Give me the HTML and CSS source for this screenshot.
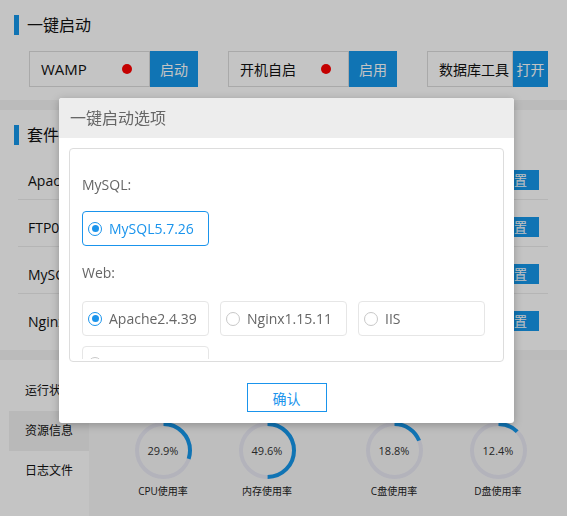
FILE: index.html
```html
<!DOCTYPE html>
<html lang="zh-CN">
<head>
<meta charset="utf-8">
<title>一键启动选项</title>
<link rel="stylesheet" href="styles.css">
</head>
<body>
<div class="page">
  <section class="sec sec-start">
    <h2 class="sec-title">一键启动</h2>
    <div class="cards">
      <div class="card">
        <div class="card-box box-wide"><span class="latin">WAMP</span><i class="dot"></i></div>
        <button class="btn btn-wide">启动</button>
      </div>
      <div class="card">
        <div class="card-box box-wide"><span>开机自启</span><i class="dot"></i></div>
        <button class="btn btn-wide">启用</button>
      </div>
      <div class="card">
        <div class="card-box box-narrow"><span>数据库工具</span></div>
        <button class="btn btn-narrow">打开</button>
      </div>
    </div>
  </section>
  <div class="band"></div>
  <section class="sec sec-suite">
    <h2 class="sec-title">套件</h2>
    <ul class="rows">
      <li class="row"><span>Apache2.4.39</span><button class="btn-sm">设置</button></li>
      <li class="row"><span>FTP0.9.60</span><button class="btn-sm">设置</button></li>
      <li class="row"><span>MySQL5.7.26</span><button class="btn-sm">设置</button></li>
      <li class="row"><span>Nginx1.15.11</span><button class="btn-sm">设置</button></li>
    </ul>
  </section>
  <div class="band"></div>
  <section class="sec-bottom">
    <nav class="nav">
      <div class="nav-item">运行状态</div>
      <div class="nav-item active">资源信息</div>
      <div class="nav-item">日志文件</div>
    </nav>
    <div class="main">
      <div class="gauge-group">
        <div class="gauge">
          <div class="ring">
            <svg viewBox="0 0 57 57" width="57" height="57"><circle class="track" cx="28.5" cy="28.5" r="26.5"/><circle class="bar" cx="28.5" cy="28.5" r="26.5" style="stroke-dasharray: 49.8 166.5"/></svg>
            <span class="val">29.9%</span>
          </div>
          <div class="glabel">CPU使用率</div>
        </div>
        <div class="gauge">
          <div class="ring">
            <svg viewBox="0 0 57 57" width="57" height="57"><circle class="track" cx="28.5" cy="28.5" r="26.5"/><circle class="bar" cx="28.5" cy="28.5" r="26.5" style="stroke-dasharray: 82.6 166.5"/></svg>
            <span class="val">49.6%</span>
          </div>
          <div class="glabel">内存使用率</div>
        </div>
      </div>
      <div class="gauge-group">
        <div class="gauge">
          <div class="ring">
            <svg viewBox="0 0 57 57" width="57" height="57"><circle class="track" cx="28.5" cy="28.5" r="26.5"/><circle class="bar" cx="28.5" cy="28.5" r="26.5" style="stroke-dasharray: 31.3 166.5"/></svg>
            <span class="val">18.8%</span>
          </div>
          <div class="glabel">C盘使用率</div>
        </div>
        <div class="gauge">
          <div class="ring">
            <svg viewBox="0 0 57 57" width="57" height="57"><circle class="track" cx="28.5" cy="28.5" r="26.5"/><circle class="bar" cx="28.5" cy="28.5" r="26.5" style="stroke-dasharray: 20.6 166.5"/></svg>
            <span class="val">12.4%</span>
          </div>
          <div class="glabel">D盘使用率</div>
        </div>
      </div>
    </div>
  </section>
</div>
<div class="mask"></div>
<div class="modal">
  <div class="modal-head">一键启动选项</div>
  <div class="modal-body">
    <div class="opt-box">
      <div class="opt-scroll">
        <div class="opt-label">MySQL:</div>
        <div class="opt-grid">
          <label class="opt checked focused"><i class="radio"></i><span>MySQL5.7.26</span></label>
        </div>
        <div class="opt-label">Web:</div>
        <div class="opt-grid">
          <label class="opt checked"><i class="radio"></i><span>Apache2.4.39</span></label>
          <label class="opt"><i class="radio"></i><span>Nginx1.15.11</span></label>
          <label class="opt"><i class="radio"></i><span>IIS</span></label>
          <label class="opt"><i class="radio"></i><span>Jexus</span></label>
        </div>
      </div>
    </div>
  </div>
  <div class="modal-foot">
    <button class="btn-ok">确认</button>
  </div>
</div>
</body>
</html>
```

FILE: styles.css
```css
* { box-sizing: border-box; }
html, body {
  margin: 0;
  padding: 0;
  width: 567px;
  height: 516px;
  overflow: hidden;
  background: #fff;
  font-family: "Open Sans", "Noto Sans CJK SC", sans-serif;
  color: #111;
}
button {
  font-family: inherit;
  border: 0;
  padding: 0;
  margin: 0;
  cursor: pointer;
}
ul { list-style: none; margin: 0; padding: 0; }

.page { width: 567px; height: 516px; }

.sec-title {
  margin: 0;
  display: flex;
  align-items: center;
  height: 20px;
  padding-left: 14px;
  font-size: 16px;
  font-weight: normal;
  line-height: 20px;
}
.sec-title::before {
  content: "";
  width: 5px;
  height: 20px;
  background: #1697ea;
  margin-right: 8px;
}

.sec-start { height: 100px; padding-top: 15px; }
.cards {
  display: flex;
  gap: 30px;
  margin-top: 16px;
  padding-left: 29px;
}
.card { display: flex; height: 36px; }
.card-box {
  height: 36px;
  border: 1px solid #dcdcdc;
  display: flex;
  align-items: center;
  justify-content: space-between;
  padding: 0 17px 0 11px;
  font-size: 14px;
  white-space: nowrap;
}
.card-box .latin { font-size: 15px; }
.box-wide { width: 121px; }
.box-narrow { width: 86px; padding-right: 0; }
.dot {
  width: 10px;
  height: 10px;
  border-radius: 50%;
  background: #ff0000;
}
.btn {
  height: 36px;
  background: #1697ea;
  color: #fff;
  font-size: 14px;
}
.btn-wide { width: 48px; }
.btn-narrow { width: 35px; }

.band { height: 10px; background: #f4f4f4; }

.sec-suite { height: 240px; padding-top: 15px; }
.rows { margin: 8px 19px 0 18px; }
.row {
  height: 47px;
  padding: 8px 9px 0 10px;
  border-bottom: 1px solid #ececec;
  display: flex;
  align-items: center;
  justify-content: space-between;
  font-size: 14px;
}
.row:last-child { border-bottom: 0; height: 46px; }
.btn-sm {
  width: 50px;
  height: 20px;
  background: #1697ea;
  color: #fff;
  font-size: 13px;
  line-height: 20px;
}

.sec-bottom { height: 156px; display: flex; padding-left: 9px; }
.nav { width: 80px; padding-top: 11px; }
.nav-item {
  height: 40px;
  line-height: 40px;
  padding-left: 16px;
  font-size: 12px;
}
.nav-item.active { background: #f1f1f1; }
.main {
  flex: 1;
  background: #f8f8f8;
  display: flex;
  gap: 23px;
  padding: 62px 0 0 22px;
}
.gauge-group { display: flex; }
.gauge {
  width: 104px;
  display: flex;
  flex-direction: column;
  align-items: center;
}
.ring { display: grid; width: 57px; height: 57px; }
.ring svg, .ring .val { grid-area: 1 / 1; }
.ring svg { transform: rotate(-90deg); }
.ring .val {
  align-self: center;
  justify-self: center;
  font-size: 11px;
  color: #333;
}
.track { fill: none; stroke: #e9e9f4; stroke-width: 4; }
.bar { fill: none; stroke: #1697ea; stroke-width: 4; }
.glabel { margin-top: 5px; font-size: 10px; line-height: 14px; color: #222; }

.mask {
  position: fixed;
  inset: 0;
  background: rgba(0, 0, 0, 0.23);
}

.modal {
  position: absolute;
  left: 59px;
  top: 98px;
  width: 455px;
  height: 325px;
  background: #fff;
  border-radius: 3px;
  box-shadow: 0 2px 8px rgba(0, 0, 0, 0.25);
}
.modal-head {
  height: 40px;
  line-height: 40px;
  padding-left: 11px;
  background: #ededed;
  border-radius: 3px 3px 0 0;
  font-size: 16px;
  color: #666;
}
.modal-body { padding: 10px 10px 0; }
.opt-box {
  height: 214px;
  border: 1px solid #dddddd;
  border-radius: 4px;
  padding: 2px 2px 2px 0;
}
.opt-scroll {
  height: 100%;
  overflow-y: scroll;
  padding: 0 12px 10px;
}
.opt-scroll::-webkit-scrollbar { width: 4px; }
.opt-scroll::-webkit-scrollbar-track { background: #f3f3f3; }
.opt-scroll::-webkit-scrollbar-thumb { background: #1a94ec; border-radius: 2px; }
.opt-label {
  height: 24px;
  line-height: 24px;
  margin-top: 22px;
  font-size: 14px;
  color: #666;
}
.opt-grid + .opt-label { margin-top: 15px; }
.opt-grid {
  display: grid;
  grid-template-columns: repeat(3, 127px);
  column-gap: 11px;
  row-gap: 10px;
  margin-top: 14px;
}
.opt-label + .opt-grid { margin-top: 14px; }
.opt-grid + .opt-label + .opt-grid { margin-top: 16px; }
.opt {
  height: 35px;
  border: 1px solid #e6e6e6;
  border-radius: 4px;
  display: flex;
  align-items: center;
  gap: 7px;
  padding-left: 5px;
  font-size: 14px;
  color: #666;
}
.radio {
  width: 14px;
  height: 14px;
  border: 1px solid #c8c8c8;
  border-radius: 50%;
  display: flex;
  align-items: center;
  justify-content: center;
}
.opt.focused { border-color: #1a94ec; color: #1a94ec; }
.opt.checked .radio { border-color: #1a94ec; }
.opt.checked .radio::after {
  content: "";
  width: 7px;
  height: 7px;
  border-radius: 50%;
  background: #1a94ec;
}
.modal-foot {
  display: flex;
  justify-content: center;
  padding-top: 21px;
}
.btn-ok {
  width: 80px;
  height: 29px;
  border: 1px solid #1a94ec;
  background: #fff;
  color: #1a94ec;
  font-size: 14px;
}
```
